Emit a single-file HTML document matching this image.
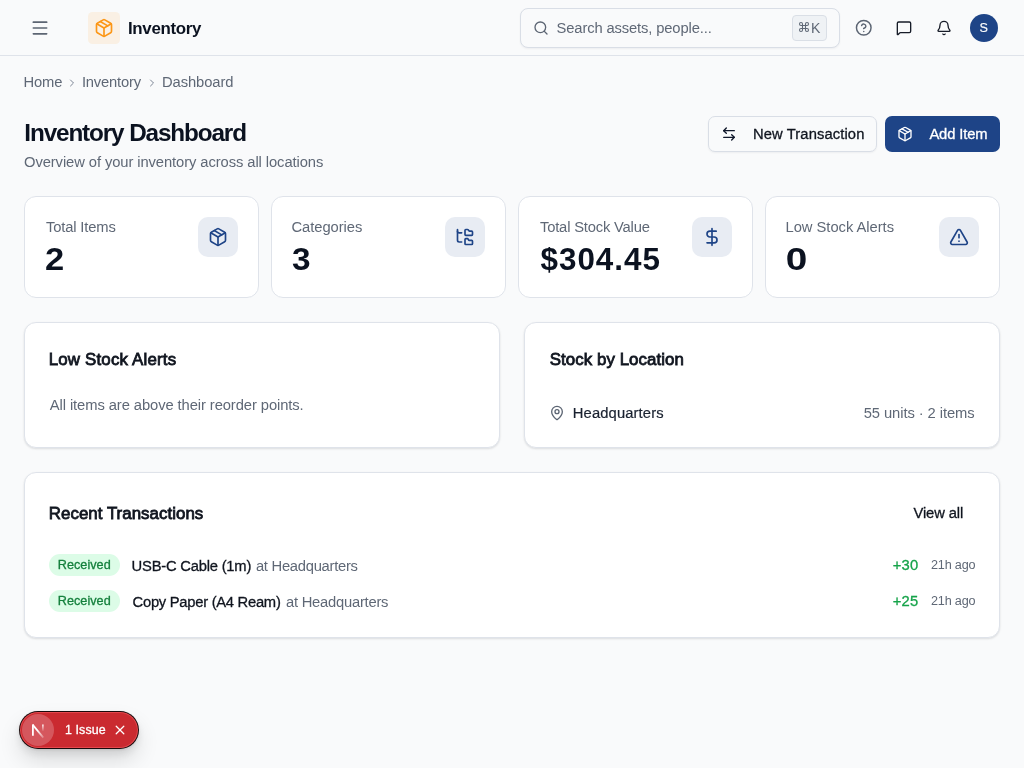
<!DOCTYPE html>
<html lang="en">
<head>
<meta charset="utf-8">
<title>Inventory Dashboard</title>
<style>
*{box-sizing:border-box;margin:0;padding:0}
html,body{width:1024px;height:768px;overflow:hidden}
body{background:#f9fafb;font-family:"Liberation Sans",sans-serif;color:#0f172a;position:relative}
#root{position:absolute;left:0;top:0;width:1024px;height:768px;will-change:transform}
.abs{position:absolute}
.t{position:absolute;white-space:nowrap;line-height:1}
svg{position:absolute;overflow:visible}
.ic{fill:none;stroke-linecap:round;stroke-linejoin:round}
/* header */
#hdr{position:absolute;left:0;top:0;width:1024px;height:56px;border-bottom:1px solid #dfe3ea;background:#f9fafb}
#logo{position:absolute;left:88px;top:12px;width:32px;height:32px;border-radius:4.5px;background:#faf0e4}
#search{position:absolute;left:520px;top:8px;width:320px;height:40px;border:1px solid #d9dee6;border-radius:8px;background:#f9fafb;box-shadow:0 1px 2px rgba(15,23,42,.05)}
#kbd{position:absolute;left:792px;top:15px;width:35px;height:26px;border:1px solid #dadfe6;border-radius:4px;background:#eff2f5}
#avatar{position:absolute;left:970px;top:14px;width:28px;height:28px;border-radius:50%;background:#1e4487}
/* cards */
.card{position:absolute;background:#fff;border:1px solid #dfe3ea;border-radius:12px}
.sh{box-shadow:0 1px 2px rgba(15,23,42,.08),0 1px 3px rgba(15,23,42,.06)}
.ibox{position:absolute;width:40px;height:40px;border-radius:10px;background:#e8ecf3}
.lbl{font-size:15px;color:#5b6472}
.num{font-size:32px;font-weight:700;color:#0b1220}
.h2{font-size:17px;font-weight:700;color:#0f172a}
.muted{color:#5b6472}
.badge{position:absolute;width:71px;height:22px;border-radius:11px;background:#dcfce7}
.btn{position:absolute;height:36px;border-radius:7px}
</style>
</head>
<body>
<div id="root">
<!-- HEADER -->
<div id="hdr"></div>
<svg class="ic" style="left:30px;top:18px" width="20" height="20" viewBox="0 0 24 24" stroke="#5c6573" stroke-width="2"><path d="M4 5h16M4 12h16M4 19h16"/></svg>
<div id="logo"></div>
<svg class="ic" style="left:94px;top:18px" width="20" height="20" viewBox="0 0 24 24" stroke="#fc9616" stroke-width="2"><path d="M11 21.73a2 2 0 0 0 2 0l7-4A2 2 0 0 0 21 16V8a2 2 0 0 0-1-1.73l-7-4a2 2 0 0 0-2 0l-7 4A2 2 0 0 0 3 8v8a2 2 0 0 0 1 1.73z"/><path d="M12 22V12"/><path d="M3.29 7 12 12l8.71-5"/><path d="m7.5 4.27 9 5.15"/></svg>

<div id="search"></div>
<svg class="ic" style="left:533px;top:20px" width="16" height="16" viewBox="0 0 24 24" stroke="#5c6573" stroke-width="2"><circle cx="11" cy="11" r="8"/><path d="m21 21-4.3-4.3"/></svg>
<div id="kbd"></div>
<svg class="ic" style="left:798.1px;top:21.25px" width="12" height="12" viewBox="0 0 24 24" stroke="#5f6876" stroke-width="2.15"><path d="M15 6v12a3 3 0 1 0 3-3H6a3 3 0 1 0 3 3V6a3 3 0 1 0-3 3h12a3 3 0 1 0-3-3"/></svg>

<svg class="ic" style="left:855.25px;top:19.25px" width="17.5" height="17.5" viewBox="0 0 24 24" stroke="#5c6573" stroke-width="2"><circle cx="12" cy="12" r="10"/><path d="M9.09 9a3 3 0 0 1 5.83 1c0 2-3 3-3 3"/><path d="M12 17h.01"/></svg>
<svg class="ic" style="left:896px;top:19.75px" width="16" height="16" viewBox="0 0 24 24" stroke="#171c28" stroke-width="2"><path d="M22 17a2 2 0 0 1-2 2H6.828a2 2 0 0 0-1.414.586l-2.202 2.202A.71.71 0 0 1 2 21.286V5a2 2 0 0 1 2-2h16a2 2 0 0 1 2 2z"/></svg>
<svg class="ic" style="left:936px;top:19.75px" width="16" height="16" viewBox="0 0 24 24" stroke="#171c28" stroke-width="2"><path d="M10.268 21a2 2 0 0 0 3.464 0"/><path d="M3.262 15.326A1 1 0 0 0 4 17h16a1 1 0 0 0 .74-1.673C19.41 13.956 18 12.499 18 8A6 6 0 0 0 6 8c0 4.499-1.411 5.956-2.738 7.326"/></svg>
<div id="avatar"></div>

<!-- BREADCRUMB -->
<svg class="ic" style="left:66px;top:76.75px" width="12" height="12" viewBox="0 0 24 24" stroke="#7b8494" stroke-width="2"><path d="m9 18 6-6-6-6"/></svg>
<svg class="ic" style="left:146px;top:76.75px" width="12" height="12" viewBox="0 0 24 24" stroke="#7b8494" stroke-width="2"><path d="m9 18 6-6-6-6"/></svg>

<!-- TITLE -->

<!-- BUTTONS -->
<div class="btn" style="left:708px;top:116px;width:169px;border:1px solid #d9dee6;background:#f9fafb;box-shadow:0 1px 2px rgba(15,23,42,.05)"></div>
<svg class="ic" style="left:721px;top:126px" width="16" height="16" viewBox="0 0 24 24" stroke="#0f172a" stroke-width="2"><path d="M8 3 4 7l4 4"/><path d="M4 7h16"/><path d="m16 21 4-4-4-4"/><path d="M20 17H4"/></svg>
<div class="btn" style="left:885px;top:116px;width:115px;background:#1e4487"></div>
<svg class="ic" style="left:897px;top:126px" width="16" height="16" viewBox="0 0 24 24" stroke="#fff" stroke-width="2"><path d="M11 21.73a2 2 0 0 0 2 0l7-4A2 2 0 0 0 21 16V8a2 2 0 0 0-1-1.73l-7-4a2 2 0 0 0-2 0l-7 4A2 2 0 0 0 3 8v8a2 2 0 0 0 1 1.73z"/><path d="M12 22V12"/><path d="M3.29 7 12 12l8.71-5"/><path d="m7.5 4.27 9 5.15"/></svg>

<!-- STAT CARDS -->
<div class="card" style="left:24px;top:196px;width:235px;height:102px"></div>
<div class="card" style="left:271px;top:196px;width:235px;height:102px"></div>
<div class="card" style="left:518px;top:196px;width:235px;height:102px"></div>
<div class="card" style="left:765px;top:196px;width:235px;height:102px"></div>

<div class="ibox" style="left:198px;top:217px"></div>
<svg class="ic" style="left:208px;top:227px" width="20" height="20" viewBox="0 0 24 24" stroke="#1e4487" stroke-width="2"><path d="M11 21.73a2 2 0 0 0 2 0l7-4A2 2 0 0 0 21 16V8a2 2 0 0 0-1-1.73l-7-4a2 2 0 0 0-2 0l-7 4A2 2 0 0 0 3 8v8a2 2 0 0 0 1 1.73z"/><path d="M12 22V12"/><path d="M3.29 7 12 12l8.71-5"/><path d="m7.5 4.27 9 5.15"/></svg>

<div class="ibox" style="left:445px;top:217px"></div>
<svg class="ic" style="left:455px;top:227px" width="20" height="20" viewBox="0 0 24 24" stroke="#1e4487" stroke-width="2"><path d="M20 10a1 1 0 0 0 1-1V6a1 1 0 0 0-1-1h-2.500a1 1 0 0 1-.8-.4l-.9-1.200A1 1 0 0 0 15 3h-2a1 1 0 0 0-1 1v5a1 1 0 0 0 1 1Z"/><path d="M20 21a1 1 0 0 0 1-1v-3a1 1 0 0 0-1-1h-2.900a1 1 0 0 1-.88-.55l-.42-.85a1 1 0 0 0-.92-.6H13a1 1 0 0 0-1 1v5a1 1 0 0 0 1 1Z"/><path d="M3 5a2 2 0 0 0 2 2h3"/><path d="M3 3v13a2 2 0 0 0 2 2h3"/></svg>

<div class="ibox" style="left:692px;top:217px"></div>
<svg class="ic" style="left:702px;top:227px" width="20" height="20" viewBox="0 0 24 24" stroke="#1e4487" stroke-width="2"><path d="M12 2v20"/><path d="M17 5H9.500a3.500 3.500 0 0 0 0 7h5a3.500 3.500 0 0 1 0 7H6"/></svg>

<div class="ibox" style="left:939px;top:217px"></div>
<svg class="ic" style="left:949px;top:227px" width="20" height="20" viewBox="0 0 24 24" stroke="#1e4487" stroke-width="2"><path d="m21.730 18-8-14a2 2 0 0 0-3.480 0l-8 14A2 2 0 0 0 4 21h16a2 2 0 0 0 1.730-3"/><path d="M12 9v4"/><path d="M12 17h.01"/></svg>

<!-- MID CARDS -->
<div class="card sh" style="left:24px;top:322px;width:476px;height:126px"></div>

<div class="card sh" style="left:524px;top:322px;width:476px;height:126px"></div>
<svg class="ic" style="left:549px;top:405.3px" width="16" height="16" viewBox="0 0 24 24" stroke="#5c6573" stroke-width="2"><path d="M20 10c0 4.993-5.539 10.193-7.399 11.799a1 1 0 0 1-1.202 0C9.539 20.193 4 14.993 4 10a8 8 0 0 1 16 0"/><circle cx="12" cy="10" r="3"/></svg>

<!-- TRANSACTIONS -->
<div class="card sh" style="left:24px;top:472px;width:976px;height:166px"></div>

<div class="badge" style="left:49px;top:554px"></div>

<div class="badge" style="left:49px;top:590px"></div>

<div class="t" style="left:127.90px;top:21px;font-size:16.9px;color:#0b1220;font-weight:700;letter-spacing:-0.300px;">Inventory</div>
<div class="t" style="left:556.60px;top:21px;font-size:14.75px;color:#5f6876;letter-spacing:-0.135px;">Search assets, people...</div>
<div class="t" style="left:811.25px;top:21px;font-size:14.75px;color:#5f6876;transform:scaleX(0.956);transform-origin:1.0px 0;">K</div>
<div class="t" style="left:979.50px;top:22px;font-size:12.65px;color:#fff;-webkit-text-stroke:0.15px #fff;">S</div>
<div class="t" style="left:23.50px;top:75px;font-size:14.75px;color:#5f6876;letter-spacing:-0.167px;">Home</div>
<div class="t" style="left:81.90px;top:75px;font-size:14.75px;color:#5f6876;letter-spacing:-0.175px;">Inventory</div>
<div class="t" style="left:162.00px;top:75px;font-size:14.75px;color:#5f6876;letter-spacing:-0.094px;">Dashboard</div>
<div class="t" style="left:24.30px;top:121px;font-size:24.3px;color:#0b1220;font-weight:700;letter-spacing:-1.128px;">Inventory Dashboard</div>
<div class="t" style="left:24.00px;top:155px;font-size:14.75px;color:#5f6876;letter-spacing:-0.087px;">Overview of your inventory across all locations</div>
<div class="t" style="left:753.00px;top:127px;font-size:14.75px;color:#10151f;letter-spacing:0.107px;-webkit-text-stroke:0.3px #10151f;">New Transaction</div>
<div class="t" style="left:929.40px;top:127px;font-size:14.75px;color:#fff;letter-spacing:-0.114px;-webkit-text-stroke:0.3px #fff;">Add Item</div>
<div class="t" style="left:46.00px;top:220px;font-size:14.75px;color:#5f6876;letter-spacing:-0.150px;">Total Items</div>
<div class="t" style="left:45.00px;top:244px;font-size:31.4px;color:#0b1220;font-weight:700;transform:scaleX(1.100);transform-origin:1.0px 0;">2</div>
<div class="t" style="left:291.50px;top:220px;font-size:14.75px;color:#5f6876;letter-spacing:-0.056px;">Categories</div>
<div class="t" style="left:292.00px;top:244px;font-size:31.4px;color:#0b1220;font-weight:700;transform:scaleX(1.062);transform-origin:1.0px 0;">3</div>
<div class="t" style="left:540.00px;top:220px;font-size:14.75px;color:#5f6876;letter-spacing:-0.188px;">Total Stock Value</div>
<div class="t" style="left:540.50px;top:244px;font-size:31.4px;color:#0b1220;font-weight:700;letter-spacing:1.000px;">$304.45</div>
<div class="t" style="left:785.50px;top:220px;font-size:14.75px;color:#5f6876;letter-spacing:-0.033px;">Low Stock Alerts</div>
<div class="t" style="left:785.50px;top:244px;font-size:31.4px;color:#0b1220;font-weight:700;transform:scaleX(1.233);transform-origin:1.0px 0;">0</div>
<div class="t" style="left:48.70px;top:352px;font-size:16.9px;color:#10151f;letter-spacing:0.170px;-webkit-text-stroke:0.8px #10151f;">Low Stock Alerts</div>
<div class="t" style="left:49.75px;top:398px;font-size:14.75px;color:#5f6876;letter-spacing:-0.087px;">All items are above their reorder points.</div>
<div class="t" style="left:549.75px;top:352px;font-size:16.9px;color:#10151f;letter-spacing:0.047px;-webkit-text-stroke:0.8px #10151f;">Stock by Location</div>
<div class="t" style="left:572.80px;top:406px;font-size:14.75px;color:#1a2230;letter-spacing:0.127px;-webkit-text-stroke:0.2px #1a2230;">Headquarters</div>
<div class="t" style="left:863.70px;top:406px;font-size:14.75px;color:#5f6876;letter-spacing:-0.076px;">55 units &middot; 2 items</div>
<div class="t" style="left:48.80px;top:506px;font-size:16.9px;color:#10151f;letter-spacing:0.028px;-webkit-text-stroke:0.8px #10151f;">Recent Transactions</div>
<div class="t" style="left:913.50px;top:506px;font-size:14.75px;color:#10151f;letter-spacing:-0.129px;-webkit-text-stroke:0.3px #10151f;">View all</div>
<div class="t" style="left:57.75px;top:559px;font-size:12.65px;color:#15803d;letter-spacing:0.036px;-webkit-text-stroke:0.3px #15803d;">Received</div>
<div class="t" style="left:57.75px;top:595px;font-size:12.65px;color:#15803d;letter-spacing:0.036px;-webkit-text-stroke:0.3px #15803d;">Received</div>
<div class="t" style="left:131.60px;top:559px;font-size:14.75px;color:#10151f;letter-spacing:-0.213px;-webkit-text-stroke:0.3px #10151f;">USB-C Cable (1m)</div>
<div class="t" style="left:255.90px;top:559px;font-size:14.75px;color:#5f6876;letter-spacing:-0.264px;">at Headquarters</div>
<div class="t" style="left:132.60px;top:595px;font-size:14.75px;color:#10151f;letter-spacing:-0.268px;-webkit-text-stroke:0.3px #10151f;">Copy Paper (A4 Ream)</div>
<div class="t" style="left:286.00px;top:595px;font-size:14.75px;color:#5f6876;letter-spacing:-0.236px;">at Headquarters</div>
<div class="t" style="left:892.80px;top:558px;font-size:14.75px;color:#16a34a;letter-spacing:0.200px;-webkit-text-stroke:0.3px #16a34a;">+30</div>
<div class="t" style="left:931.00px;top:559px;font-size:12.65px;color:#5f6876;letter-spacing:-0.200px;">21h ago</div>
<div class="t" style="left:892.80px;top:594px;font-size:14.75px;color:#16a34a;letter-spacing:0.200px;-webkit-text-stroke:0.3px #16a34a;">+25</div>
<div class="t" style="left:931.00px;top:595px;font-size:12.65px;color:#5f6876;letter-spacing:-0.200px;">21h ago</div>
<!-- ISSUE PILL -->
<div class="abs" style="left:19px;top:711px;width:120px;height:38px;border-radius:19px;background:#1a0a0b;box-shadow:0 12px 22px rgba(0,0,0,.12),0 5px 10px rgba(0,0,0,.08),0 1px 3px rgba(0,0,0,.10)"></div>
<div class="abs" style="left:20px;top:712px;width:118px;height:36px;border-radius:18px;background:#e5484d"></div>
<div class="abs" style="left:21px;top:713px;width:116px;height:34px;border-radius:17px;background:#ca2a30"></div>
<div class="abs" style="left:22px;top:714px;width:32px;height:32px;border-radius:50%;background:#d5575d"></div>
<svg style="left:22px;top:714px" width="32" height="32" viewBox="0 0 32 32">
<defs>
<linearGradient id="ng1" gradientUnits="userSpaceOnUse" x1="16" y1="16" x2="21.5" y2="23.5"><stop offset="0" stop-color="#fff"/><stop offset="1" stop-color="#fff" stop-opacity=".25"/></linearGradient>
<linearGradient id="ng2" gradientUnits="userSpaceOnUse" x1="0" y1="10.5" x2="0" y2="17.5"><stop offset="0" stop-color="#fff"/><stop offset="1" stop-color="#fff" stop-opacity="0"/></linearGradient>
</defs>
<path d="M10.9 10.4V21.7" stroke="#fff" stroke-width="1.8" fill="none"/>
<path d="M10.6 10.6 21.3 23.6" stroke="url(#ng1)" stroke-width="1.7" fill="none"/>
<path d="M20.9 10.4V17.5" stroke="url(#ng2)" stroke-width="1.5" fill="none"/>
</svg>
<div class="t" style="left:64.90px;top:724px;font-size:12.4px;color:#fff;letter-spacing:0.133px;-webkit-text-stroke:0.3px #fff;">1 Issue</div>
<svg class="ic" style="left:113px;top:723.3px" width="14" height="14" viewBox="0 0 24 24" stroke="#fff" stroke-width="2.2"><path d="M18.500 5.500 5.500 18.500"/><path d="m5.500 5.500 13 13"/></svg>
</div>
</body>
</html>
